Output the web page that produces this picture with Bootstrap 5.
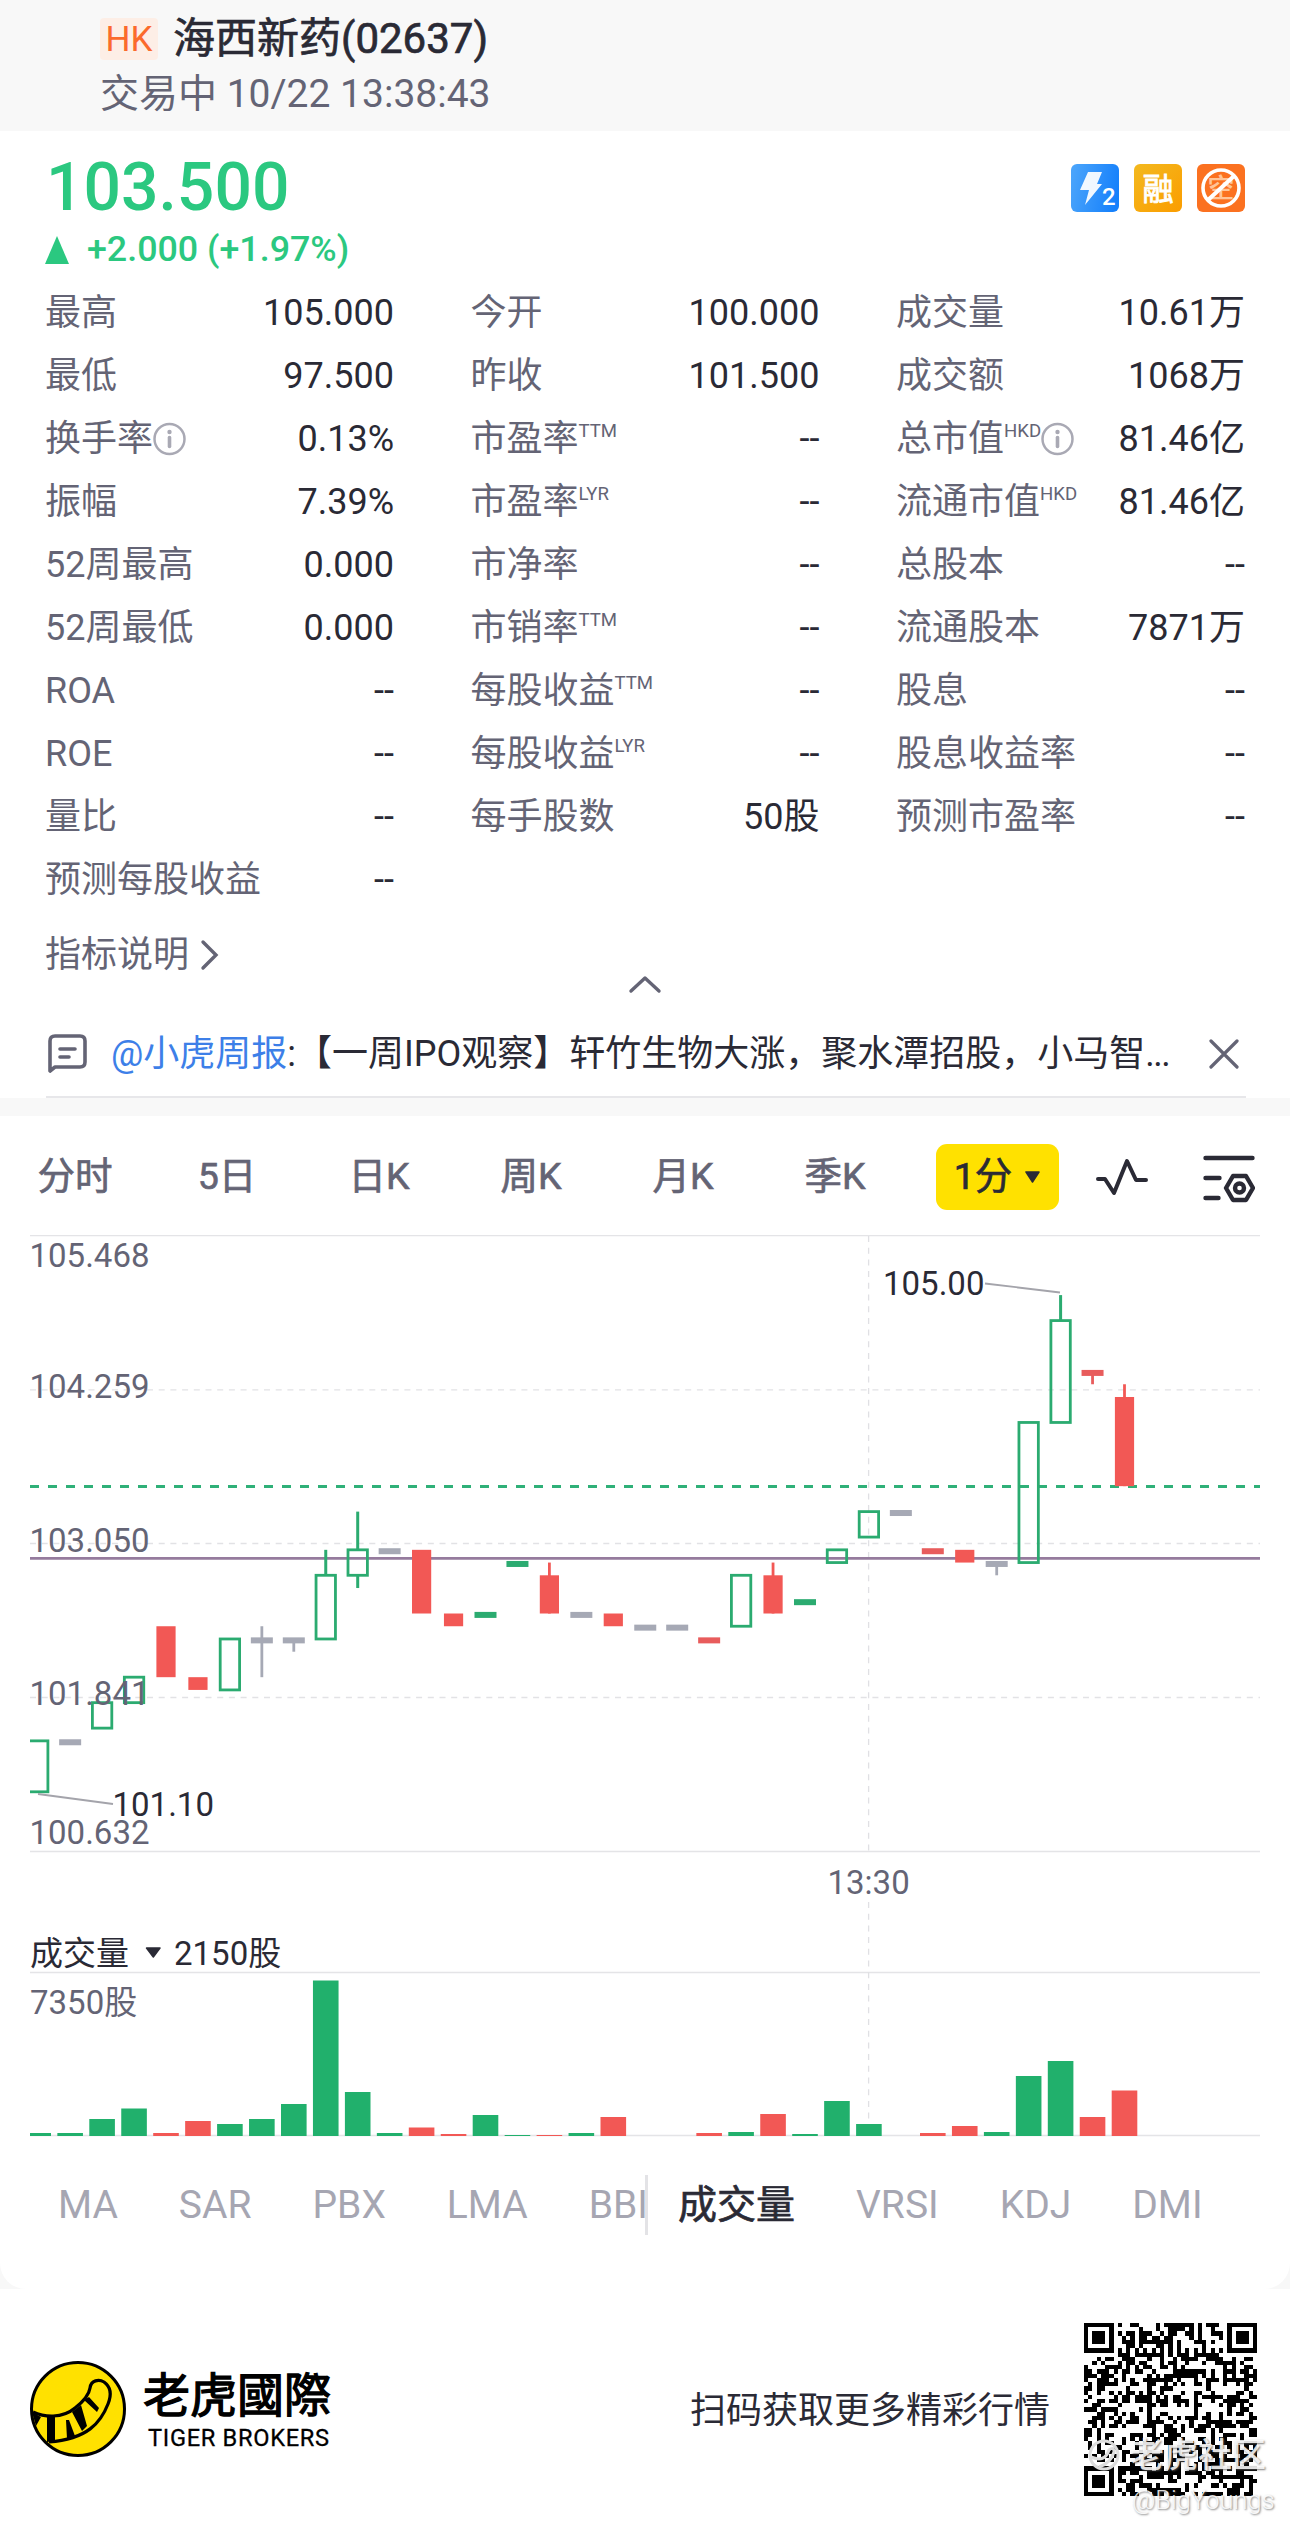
<!DOCTYPE html>
<html lang="zh-CN">
<head>
<meta charset="utf-8">
<meta name="viewport" content="width=device-width, initial-scale=1">
<title>海西新药(02637)</title>
<link href="https://cdn.jsdelivr.net/npm/bootstrap@5.3.0/dist/css/bootstrap.min.css" rel="stylesheet">
<style>
  body { font-family: Roboto, "Noto Sans CJK SC", sans-serif; font-size: 36px; line-height: 1; color: #2a2a35; background: #fff; width: 1290px; overflow-x: hidden; }
  svg { display: block; flex: none; }
  .text-dim { color: #646475; }
  .text-ink { color: #2a2a35; }
  .text-up { color: #2bc880; }
  .semi { font-weight: 400; -webkit-text-stroke: .7px currentColor; }
  .quote-head { height: 131px; background: #f8f8f8; padding: 12px 0 0 100px; }
  .head-name { height: 54px; font-size: 42px; }
  .hk-tag { width: 58px; height: 42px; margin-right: 15px; background: #fdeee6; color: #fb6a2c; font-size: 35px; border-radius: 4px; -webkit-text-stroke: 0; }
  .head-time { height: 57px; font-size: 39px; }
  .price-row { height: 114px; padding: 0 45px 0 46px; }
  .last-price { font-size: 66px; font-weight: 500; }
  .flag { width: 48px; height: 48px; }
  .change-row { height: 36px; padding-left: 45px; margin: -13px 0 13px; font-size: 35.8px; font-weight: 500; }
  .stats { padding: 0 45px 0 45px; margin-top: 1px; height: 630px; }
  .stat-col { width: 349px; }
  .stat-line { height: 63.1px; white-space: nowrap; }
  .stat-line sup { font-size: 18.6px; top: -14px; line-height: 0; }
  .more-row { height: 84px; padding: 0 45px; }
  .fold-row { height: 15px; margin: -20px 0 20px; }
  .news { height: 88px; margin: 0 44px 0 46px; border-bottom: 2px solid #e7e7ea; padding-top: 2px; }
  .news-text { margin-left: 23px; width: 1062px; white-space: nowrap; }
  .news-text a { color: #3d7fe8; text-decoration: none; }
  .news-text span { letter-spacing: -1.5px; }
  .band { height: 18px; background: #f8f8f8; }
  .periods { height: 119px; padding-top: 3px; }
  .period { width: 152px; font-size: 37.5px; color: #646475; position: relative; left: -1px; }
  .period-on { width: 123px; height: 66px; margin-left: 24px; background: #ffe100; border-radius: 11px; font-size: 37.5px; }
  .charts text { font-family: Roboto, "Noto Sans CJK SC", sans-serif; font-size: 33px; }
  .inds { height: 70px; color: #a6a6b2; font-size: 39px; margin-top: 5px; }
  .ind-left { width: 645px; padding-left: 58px; gap: 61px; overflow: hidden; white-space: nowrap; height: 46px; align-items: center; }
  .ind-right { padding-left: 30px; gap: 61px; border-left: 3px solid #e3e3e6; height: 60px; }
  .card-end { height: 49px; background: #f8f8f8; }
  .card-end > div { height: 49px; background: #fff; border-radius: 0 0 26px 26px; }
  .foot { height: 240px; padding-left: 30px; }
  .brand-cn { font-size: 47px; line-height: 50px; font-family: "Noto Sans CJK TC", sans-serif; color: #000; -webkit-text-stroke: 1.3px #000; }
  .brand-en { font-size: 23.6px; line-height: 26px; margin: 8px 0 0 5px; color: #000; letter-spacing: .7px; -webkit-text-stroke: .3px #000; }
  .qr-box { position: relative; width: 173px; height: 173px; margin-right: 33px; }
  .wm { position: absolute; color: rgba(255,255,255,.85); text-shadow: 1px 1px 2px rgba(90,90,90,.75); white-space: nowrap; }
  .wm-a { left: 4px; top: 115px; font-size: 34px; font-weight: 500; }
  .wm-b { left: 48px; top: 165px; font-size: 25.5px; font-weight: 300; }
</style>
</head>
<body>
<header class="quote-head">
  <div class="head-name semi d-flex align-items-center"><span class="hk-tag d-flex align-items-center justify-content-center">HK</span>海西新药(02637)</div>
  <div class="head-time d-flex align-items-center text-dim">交易中 10/22 13:38:43</div>
</header>

<div class="price-row d-flex align-items-center justify-content-between">
  <div class="last-price text-up">103.500</div>
  <div class="d-flex" style="gap:15px">
    <svg class="flag" viewBox="0 0 48 48"><defs><linearGradient id="gb" x1="0" x2="1" y1=".3" y2=".5"><stop offset="0" stop-color="#4aa4fb"/><stop offset="1" stop-color="#1580fb"/></linearGradient><linearGradient id="gy" x1="0" x2="1" y1="0" y2="1"><stop offset="0" stop-color="#f3b91f"/><stop offset="1" stop-color="#fb9d00"/></linearGradient></defs><rect width="48" height="48" rx="6" fill="url(#gb)"/><path d="M17 8h14l-5 12h5L14 41l4-15H9z" fill="#fff" opacity=".93"/><text x="31" y="41" font-size="24" font-weight="500" fill="#fff">2</text></svg>
    <svg class="flag" viewBox="0 0 48 48"><rect width="48" height="48" rx="6" fill="url(#gy)"/><text x="24" y="35.500" font-size="31" text-anchor="middle" fill="#fff" stroke="#fff" stroke-width=".9">融</text></svg>
    <svg class="flag" viewBox="0 0 48 48"><rect width="48" height="48" rx="6" fill="#fb7120"/><text x="24" y="34" font-size="27" font-weight="500" text-anchor="middle" fill="#ffc497">空</text><circle cx="24" cy="24" r="18" fill="none" stroke="#fff" stroke-width="3.600"/><path d="M11 36 37 12" stroke="#fff" stroke-width="4"/></svg>
  </div>
</div>
<div class="change-row text-up d-flex align-items-center">
  <svg width="24" height="28" viewBox="0 0 24 28" style="margin-right:18px"><path d="M12 0 24 28H0z" fill="#2bc880"/></svg>+2.000 (+1.97%)
</div>

<section class="stats d-flex justify-content-between text-dim" id="stats"></section>

<div class="more-row d-flex justify-content-between text-dim">
  <div class="d-flex align-items-center" style="height:87px">指标说明<svg width="20" height="32" viewBox="0 0 20 32" style="margin-left:11px" fill="none" stroke="#646475" stroke-width="3.400" stroke-linecap="round"><path d="M3 3l13 13L3 29"/></svg></div>
</div>
<div class="fold-row d-flex justify-content-center"><svg width="34" height="20" viewBox="0 0 34 20" fill="none" stroke="#646475" stroke-width="3.400" stroke-linecap="round" stroke-linejoin="round"><path d="M3 16 17 3l14 13"/></svg></div>

<section class="news d-flex align-items-center">
  <svg width="42" height="42" viewBox="0 0 42 42" fill="none" stroke="#646475" stroke-width="3.600" stroke-linecap="round" stroke-linejoin="round"><path d="M4 38V8q0-5 5-5h25q5 0 5 5v21q0 5-5 5H9zM14 16h15M14 24h9"/></svg>
  <div class="news-text"><a href="#">@小虎周报</a>:【一周IPO观察】轩竹生物大涨，聚水潭招股，小马智<span>...</span></div>
  <svg width="30" height="30" viewBox="0 0 30 30" style="margin-left:36px" stroke="#646475" stroke-width="3.200" stroke-linecap="round"><path d="M2 2l26 26M28 2 2 28"/></svg>
</section>
<div class="band"></div>

<nav class="periods d-flex align-items-center">
  <div class="period semi text-center">分时</div><div class="period semi text-center">5日</div><div class="period semi text-center">日K</div><div class="period semi text-center">周K</div><div class="period semi text-center">月K</div><div class="period semi text-center">季K</div>
  <div class="period-on semi d-flex align-items-center justify-content-center">1分<svg width="17" height="12" viewBox="0 0 17 12" style="margin-left:12px"><path d="M2 1h13L8.500 11z" fill="#2a2a35" stroke="#2a2a35" stroke-width="1.500" stroke-linejoin="round"/></svg></div>
  <svg width="54" height="40" viewBox="0 0 54 40" style="margin-left:36px" fill="none" stroke="#2a2a35" stroke-width="4" stroke-linecap="round" stroke-linejoin="round"><path d="M3 22h7l9 14L32 4l9 19h10"/></svg>
  <svg width="52" height="50" viewBox="0 0 52 50" style="margin:4px 0 0 54px" fill="none" stroke="#2a2a35" stroke-width="4.400" stroke-linecap="round" stroke-linejoin="round"><path d="M2.500 4h47M2.500 24h14M2.500 44h13M30 22h13l7 12-7 12H30l-7-12z"/><circle cx="36.500" cy="34" r="4.500"/></svg>
</nav>

<svg class="charts" id="chart" width="1290" height="930" viewBox="0 1235 1290 930"></svg>

<nav class="inds d-flex align-items-center">
  <div class="ind-left d-flex"><span>MA</span><span>SAR</span><span>PBX</span><span>LMA</span><span>BBI</span></div>
  <div class="ind-right d-flex align-items-center"><span class="text-ink semi">成交量</span><span>VRSI</span><span>KDJ</span><span>DMI</span></div>
</nav>
<div class="card-end"><div></div></div>

<footer class="foot d-flex align-items-center">
  <svg width="96" height="96" viewBox="0 0 96 96">
    <circle cx="48" cy="48" r="46.500" fill="#ffe100" stroke="#000" stroke-width="3"/>
    <path d="M3 51C14 56 32 58 45 47C54 40 59 34 60 27C61 19 69 18 74 21C81 26 82 33 78 43C71 61 58 78 19 81" fill="none" stroke="#000" stroke-width="3.200"/>
    <path d="M2 51l9 5-5 9zM17 55h8l0 25-8 1zM36 59l3 0 6 16-8 3zM42 51l9-7 6 21-5 5zM54 39l5-3 10 11-2 4z"/>
  </svg>
  <div style="margin-left:17px"><div class="brand-cn">老虎國際</div><div class="brand-en">TIGER BROKERS</div></div>
  <div class="ms-auto pt-1" style="margin-right:34px">扫码获取更多精彩行情</div>
  <div class="qr-box">
    <svg id="qr" width="173" height="173" viewBox="0 0 41 41" shape-rendering="crispEdges"></svg>
    <div class="wm wm-a d-flex align-items-center"><svg width="32" height="32" viewBox="0 0 32 32" style="margin-right:10px" fill="none" stroke="#ddd" stroke-width="3"><circle cx="16" cy="16" r="14"/><path d="M3 18q14 6 18-7q5-4 5 2q-3 11-15 15"/></svg>老虎社区</div>
    <div class="wm wm-b">@BigYoungs</div>
  </div>
</footer>

<script src="https://cdn.jsdelivr.net/npm/bootstrap@5.3.0/dist/js/bootstrap.bundle.min.js"></script>
<script>
// Quote statistics: [label, value, superscript, info icon]
const columns = [
  [['最高','105.000'],['最低','97.500'],['换手率','0.13%','',1],['振幅','7.39%'],['52周最高','0.000'],['52周最低','0.000'],['ROA','--'],['ROE','--'],['量比','--'],['预测每股收益','--']],
  [['今开','100.000'],['昨收','101.500'],['市盈率','--','TTM'],['市盈率','--','LYR'],['市净率','--'],['市销率','--','TTM'],['每股收益','--','TTM'],['每股收益','--','LYR'],['每手股数','50股']],
  [['成交量','10.61万'],['成交额','1068万'],['总市值','81.46亿','HKD',1],['流通市值','81.46亿','HKD'],['总股本','--'],['流通股本','7871万'],['股息','--'],['股息收益率','--'],['预测市盈率','--']]
];
const info = '<svg width="34" height="34" viewBox="0 0 34 34"><circle cx="16.500" cy="17" r="15" fill="none" stroke="#a9a9b4" stroke-width="2.500"/><circle cx="16.500" cy="10" r="2.200" fill="#a9a9b4"/><path d="M16.500 15.500v9" stroke="#a9a9b4" stroke-width="3.600" stroke-linecap="round"/></svg>';
document.getElementById('stats').innerHTML = columns.map(c => '<div class="stat-col">' + c.map(([l, v, s, i]) =>
  `<div class="stat-line d-flex align-items-center justify-content-between"><div class="d-flex align-items-center"><span>${l}${s ? `<sup>${s}</sup>` : ''}</span>${i ? info : ''}</div><span class="text-ink">${v}</span></div>`).join('') + '</div>').join('');

// Candles: [kind, bodyTop, bodyBottom, high, low]; kinds: g hollow rise, r fall, n/G/R flat bars
const candles = [['g',101.5,101.1],['n',101.5],['g',101.8,101.6],['g',102,101.8],['r',102.4,102],['r',102,101.9],['g',102.3,101.9],['n',102.3,102.3,102.4,102],['n',102.3,102.3,102.3,102.2],['g',102.8,102.3,103,102.3],['g',103,102.8,103.3,102.7],['n',103],['r',103,102.5],['r',102.5,102.4],['G',102.5],['G',102.9],['r',102.8,102.5,102.9,102.5],['n',102.5],['r',102.5,102.4],['n',102.4],['n',102.4],['R',102.3],['g',102.8,102.4],['r',102.8,102.5,102.9,102.5],['G',102.6],['g',103,102.9],['g',103.3,103.1],['n',103.3],['R',103],['r',103,102.9],['n',102.9,102.9,102.9,102.8],['g',104,102.9],['g',104.8,104,105,104],['R',104.4,104.4,104.4,104.3],['r',104.2,103.5,104.3,103.5]];
const vols = ['g3','g3','g17','g27.500','r3','r15','g12','g17','g32','g155.500','g44','g3','r8.500','r2','g21','g1','r1','g3','r19','','','r3','g4','r22','g2','g35','g12','','r3','r10','g4','g60','g75','r19','r45.500'];
const Y = p => 1235.5 + (105.468 - p) * 127.36, X = i => 38.2 + 31.95 * i;
const hue = { g: '#2bab70', G: '#2bab70', r: '#f25855', R: '#e85c5c', n: '#a6a9b5' };
let s = '';
const line = (x1, y1, x2, y2, c, w, d) => s += `<line x1="${x1}" y1="${y1}" x2="${x2}" y2="${y2}" stroke="${c}" stroke-width="${w}"${d ? ` stroke-dasharray="${d}"` : ''}/>`;
const rect = (x, y, w, h, c) => s += `<rect x="${x}" y="${y}" width="${w}" height="${h}" fill="${c}"/>`;
const text = (x, y, t, c, a = 'start') => s += `<text x="${x}" y="${y}" fill="${c}" text-anchor="${a}">${t}</text>`;
s += '<clipPath id="plot"><rect x="30" y="1235" width="1230" height="905"/></clipPath>';
[1235.5, 1851.5, 1972.5, 2135.5].forEach(y => line(30, y, 1260, y, '#e4e4e7', 1.3));
[1389.8, 1543.5, 1697.5].forEach(y => line(30, y, 1260, y, '#e2e2e5', 1.3, '6 5.700'));
line(868.6, 1236, 868.6, 1851, '#e0e0e4', 1.3, '6 5.700');
line(868.6, 1902, 868.6, 2135, '#e0e0e4', 1.3, '6 5.700');
s += '<g clip-path="url(#plot)">';
line(30, 1486.5, 1260, 1486.5, '#2fb078', 3, '9 9');
line(30, 1558.4, 1260, 1558.4, '#957b9d', 2.8);
candles.forEach(([k, t, b, h, l], i) => {
  const c = hue[k], x = X(i);
  if (k === 'g') {
    s += `<rect x="${x - 9.7}" y="${Y(t)}" width="19.400" height="${Y(b) - Y(t)}" fill="none" stroke="${c}" stroke-width="2.800"/>`;
    if (h > t) line(x, Y(h), x, Y(t), c, 3);
    if (l < b) line(x, Y(b), x, Y(l), c, 3);
  } else {
    if (h) line(x, Y(h), x, Y(l), c, 2.8);
    if (k === 'r') rect(x - 9.6, Y(t), 19.2, Y(b) - Y(t), c);
    else rect(x - 11, Y(t) - 1.6, 22, 6, c);
  }
});
vols.forEach((v, i) => { if (v) { const h = +v.slice(1); rect(X(i) - 12.8, 2136 - h, 25.6, h, v[0] === 'g' ? '#21b06c' : '#f25855'); } });
s += '</g>';
line(38, 1794, 113, 1804, '#a4a4ab', 1.8);
line(985, 1283.5, 1060, 1292.5, '#a4a4ab', 1.8);
[[1267, '105.468'], [1398.4, '104.259'], [1551.8, '103.050'], [1705, '101.841'], [1843.7, '100.632']].forEach(([y, t]) => text(29.5, y, t, '#646475'));
text(112.5, 1816, '101.10', '#2a2a35');
text(883, 1295, '105.00', '#2a2a35');
text(868.6, 1893.5, '13:30', '#646475', 'middle');
text(30, 1965, '成交量', '#2a2a35');
text(174, 1965, '2150股', '#2a2a35');
text(30, 2013.5, '7350股', '#646475');
s += '<path d="M146.500 1948h13.500l-6.700 9z" fill="#2a2a35" stroke="#2a2a35" stroke-width="1.500" stroke-linejoin="round"/>';
document.getElementById('chart').innerHTML = s;

// 41-module code: seeded data area plus finder, timing and alignment patterns
let seed = 20637, q = '';
const rnd = () => (seed = (seed * 1103515245 + 12345) % 2147483648) / 2147483648;
const ring = (x, y, cx, cy) => Math.max(Math.abs(x - cx), Math.abs(y - cy));
for (let y = 0; y < 41; y++) for (let x = 0; x < 41; x++) {
  let on = rnd() < .5;
  if (x === 6 || y === 6) on = (x + y) % 2 === 0;
  [[3, 3], [37, 3], [3, 37]].forEach(([cx, cy]) => { const d = ring(x, y, cx, cy); if (d <= 4) on = d === 3 || d <= 1; });
  const a = ring(x, y, 34, 34); if (a <= 2) on = a !== 1;
  if (on) q += `M${x} ${y}h1v1h-1z`;
}
document.getElementById('qr').innerHTML = `<path d="${q}"/>`;
</script>
</body>
</html>
